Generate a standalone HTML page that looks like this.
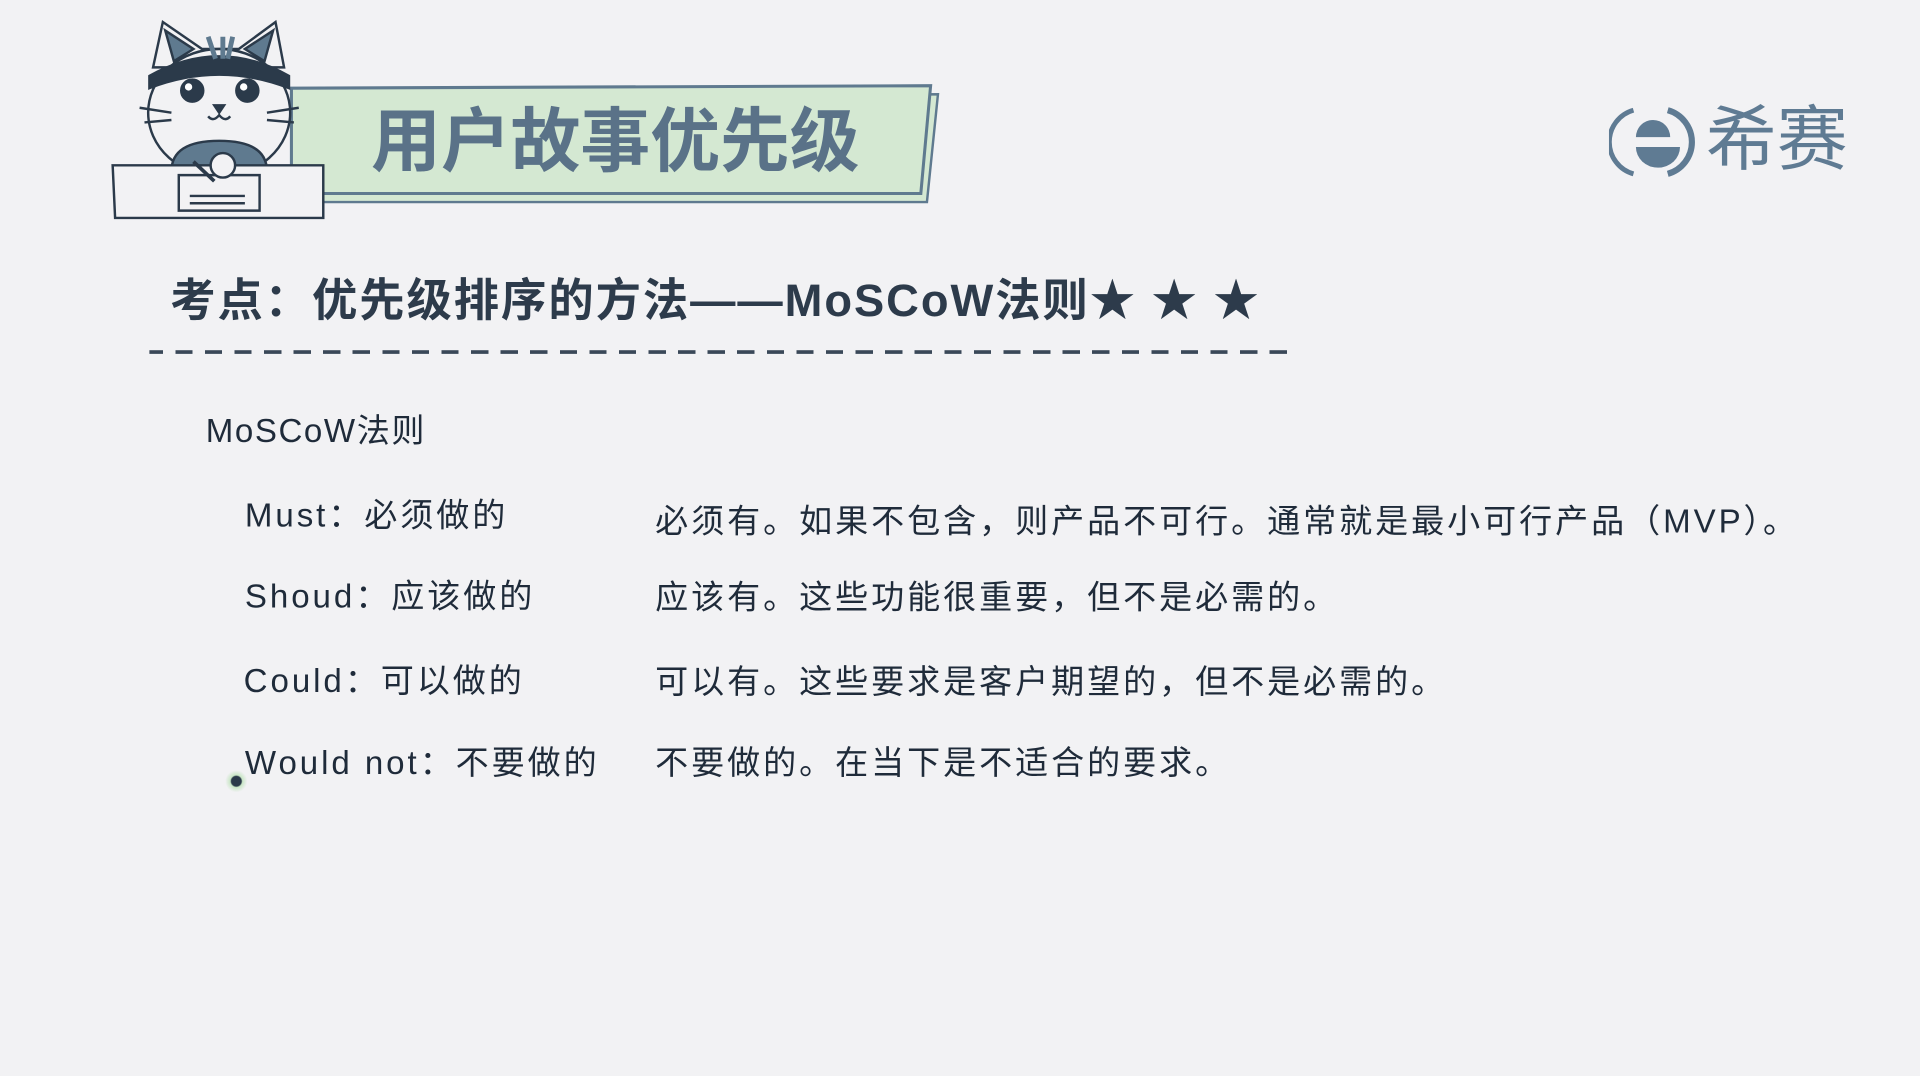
<!DOCTYPE html>
<html><head><meta charset="utf-8"><style>
html,body{margin:0;padding:0;background:#f2f2f4;width:1920px;height:1076px;overflow:hidden}
#w{position:absolute;left:0;top:0;width:1568px;height:879px;transform:scale(1.22449);transform-origin:0 0;font-family:"Liberation Sans","Noto Sans CJK SC",sans-serif;color:#1f2b3a}
.a{position:absolute;white-space:nowrap;line-height:1}
.t{font-size:27px;letter-spacing:2.4px}
</style></head><body><div id="w">
<svg class="a" style="left:0;top:0" width="800" height="200">
<polygon points="242,80 766,77 757,165 242,165" fill="#d4e8d2" stroke="#5f7a8f" stroke-width="2"/>
<polygon points="238,72 760,70 752,158 238,158" fill="#d4e8d2" stroke="#5f7a8f" stroke-width="2.5"/>
<g stroke="#2b3a4a" stroke-width="2" fill="#f2f2f4">
<path d="M125,55 L133,18 L165,40 L195,40 L225,18 L232,55 Z"/>
<path d="M135,25 L142,50 L158,40 Z" fill="#5f7a8f"/>
<path d="M223,25 L216,50 L200,40 Z" fill="#5f7a8f"/>
<ellipse cx="179" cy="92" rx="58" ry="52"/>
<path d="M122,62 Q179,30 236,62 L236,72 Q179,50 122,72 Z" fill="#2b3a4a"/>
<path d="M170,30 L176,48 M182,30 L182,48 M190,30 L186,48" stroke="#5f7a8f" stroke-width="4"/>
<circle cx="157" cy="74" r="9" fill="#2b3a4a"/><circle cx="202" cy="74" r="9" fill="#2b3a4a"/>
<circle cx="154" cy="71" r="3" fill="#fff" stroke="none"/><circle cx="199" cy="71" r="3" fill="#fff" stroke="none"/>
<path d="M175,86 L183,86 L179,92 Z" fill="#2b3a4a"/>
<path d="M170,95 Q174,100 179,94 Q184,100 188,95" fill="none"/>
<path d="M114,88 L140,92 M118,100 L140,98 M244,88 L218,92 M240,100 L218,98" fill="none"/>
<path d="M140,140 Q140,115 179,115 Q218,115 218,140 L218,160 L140,160 Z" fill="#5f7a8f"/>
<path d="M92,135 L264,135 L264,178 L94,178 Z"/>
<path d="M146,143 L212,143 L212,172 L146,172 Z"/>
<path d="M155,160 L200,160 M155,166 L200,166" fill="none"/>
<circle cx="182" cy="135" r="10"/>
<path d="M158,132 L175,148" stroke-width="3"/>
</g>
</svg>
<div class="a" style="left:303px;top:88px;font-size:57px;font-weight:bold;color:#5a7288">用户故事优先级</div>
<svg class="a" style="left:1314px;top:86px" width="75" height="60">
<path d="M20,4 A27,27 0 0 0 20,56" fill="none" stroke="#5f7b93" stroke-width="4"/>
<path d="M48,4 A27,27 0 0 1 48,56" fill="none" stroke="#5f7b93" stroke-width="5"/>
<path d="M22,26 A14,14 0 0 1 50,26 Z" fill="#5f7b93"/>
<path d="M22,34 L58,34 A17,16 0 0 1 22,34 Z" fill="#5f7b93"/>
</svg>
<div class="a" style="left:1393px;top:86px;font-size:58px;color:#5f7b93">希赛</div>
<div class="a" style="left:139px;top:227px;font-size:37px;font-weight:bold;color:#2d3b4b;letter-spacing:1.6px">考点：优先级排序的方法——MoSCoW法则★ ★ ★</div>
<div class="a" style="left:122px;top:286px;width:934px;height:0;border-top:3px dashed #3a4858;border-image:repeating-linear-gradient(90deg,#3a4858 0 14px,transparent 14px 24px) 3"></div>
<div class="a" style="left:168px;top:339px;font-size:27px;letter-spacing:1.3px">MoSCoW法则</div>
<div class="a t" style="left:200px;top:408px">Must：必须做的</div>
<div class="a t" style="left:535px;top:413px">必须有。如果不包含，则产品不可行。通常就是最小可行产品（MVP）。</div>
<div class="a t" style="left:200px;top:474px">Shoud：应该做的</div>
<div class="a t" style="left:535px;top:475px">应该有。这些功能很重要，但不是必需的。</div>
<div class="a t" style="left:199px;top:543px">Could：可以做的</div>
<div class="a t" style="left:535px;top:544px">可以有。这些要求是客户期望的，但不是必需的。</div>
<div class="a t" style="left:200px;top:610px">Would not：不要做的</div>
<div class="a t" style="left:535px;top:610px">不要做的。在当下是不适合的要求。</div>
<div class="a" style="left:184px;top:629px;width:18px;height:18px;border-radius:50%;background:radial-gradient(#2b3a4a 0 4px,#c9e6c6 5px,rgba(200,230,200,0) 9px)"></div>
</div></body></html>
